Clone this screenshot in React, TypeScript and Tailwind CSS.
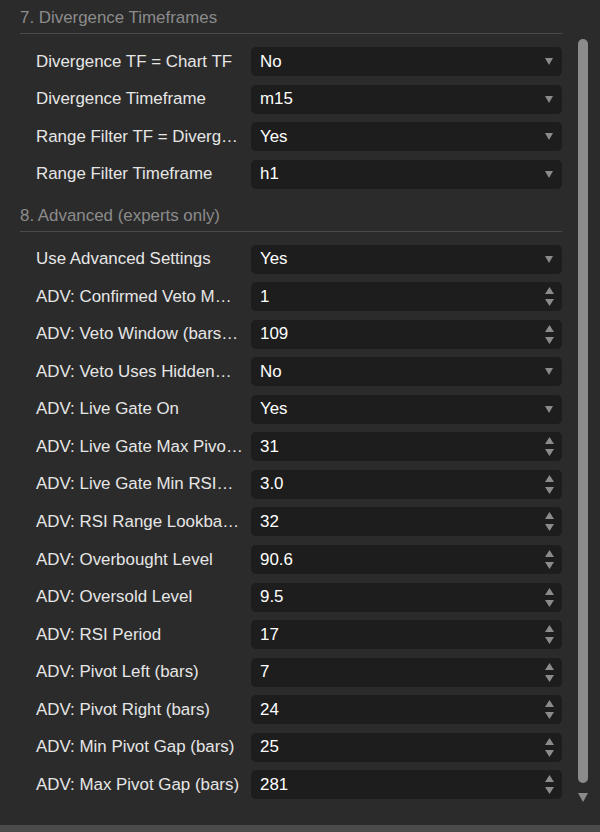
import React from "react";

type Field = {
  label: string;
  value: string;
  kind: "select" | "number";
};

type Section = {
  title: string;
  fields: Field[];
};

// labels are kept as the dialog elides them
const SECTIONS: Section[] = [
  {
    title: "7. Divergence Timeframes",
    fields: [
      { label: "Divergence TF = Chart TF", value: "No", kind: "select" },
      { label: "Divergence Timeframe", value: "m15", kind: "select" },
      { label: "Range Filter TF = Diverg…", value: "Yes", kind: "select" },
      { label: "Range Filter Timeframe", value: "h1", kind: "select" },
    ],
  },
  {
    title: "8. Advanced (experts only)",
    fields: [
      { label: "Use Advanced Settings", value: "Yes", kind: "select" },
      { label: "ADV: Confirmed Veto M…", value: "1", kind: "number" },
      { label: "ADV: Veto Window (bars…", value: "109", kind: "number" },
      { label: "ADV: Veto Uses Hidden…", value: "No", kind: "select" },
      { label: "ADV: Live Gate On", value: "Yes", kind: "select" },
      { label: "ADV: Live Gate Max Pivo…", value: "31", kind: "number" },
      { label: "ADV: Live Gate Min RSI…", value: "3.0", kind: "number" },
      { label: "ADV: RSI Range Lookba…", value: "32", kind: "number" },
      { label: "ADV: Overbought Level", value: "90.6", kind: "number" },
      { label: "ADV: Oversold Level", value: "9.5", kind: "number" },
      { label: "ADV: RSI Period", value: "17", kind: "number" },
      { label: "ADV: Pivot Left (bars)", value: "7", kind: "number" },
      { label: "ADV: Pivot Right (bars)", value: "24", kind: "number" },
      { label: "ADV: Min Pivot Gap (bars)", value: "25", kind: "number" },
      { label: "ADV: Max Pivot Gap (bars)", value: "281", kind: "number" },
    ],
  },
];

function Down({ w = 8, h = 7 }: { w?: number; h?: number }) {
  return (
    <svg width={w} height={h} viewBox={`0 0 ${w} ${h}`} className="block">
      <polygon points={`0,0 ${w},0 ${w / 2},${h}`} fill="#8b8b8b" />
    </svg>
  );
}

function Up({ w = 9, h = 7 }: { w?: number; h?: number }) {
  return (
    <svg width={w} height={h} viewBox={`0 0 ${w} ${h}`} className="block">
      <polygon points={`0,${h} ${w},${h} ${w / 2},0`} fill="#8b8b8b" />
    </svg>
  );
}

function FieldRow({ field }: { field: Field }) {
  return (
    <div className="flex items-center pl-[36px]">
      <div className="w-[204px] whitespace-nowrap text-[#e6e6e6]">{field.label}</div>
      <div className="ml-[11px] flex h-[29px] flex-1 items-center justify-between rounded-[5px] bg-[#1d1d1d] pl-[9px] pr-[8px] text-white">
        <span>{field.value}</span>
        {field.kind === "select" ? (
          <span className="pr-[1px]">
            <Down />
          </span>
        ) : (
          <span className="flex flex-col items-center gap-[5px]">
            <Up />
            <Down w={9} h={7} />
          </span>
        )}
      </div>
    </div>
  );
}

export default function App() {
  return (
    <div
      className="flex h-[832px] w-[600px] flex-col bg-[#2b2b2b] text-[16.9px] leading-[20px]"
      style={{ fontFamily: '"Liberation Sans", Arial, sans-serif' }}
    >
      <div className="flex flex-1">
        {/* settings list */}
        <div className="flex w-[578px] flex-col pr-[16px]">
          {SECTIONS.map((section, i) => (
            <div key={section.title} className={i === 0 ? "pt-[8px]" : "mt-[17px]"}>
              <div className="ml-[20px] border-b border-[#4a4a4a] pb-[5px] text-[#8b8b8b]">
                {section.title}
              </div>
              <div className="mt-[13px] flex flex-col gap-[8.55px]">
                {section.fields.map((f) => (
                  <FieldRow key={f.label} field={f} />
                ))}
              </div>
            </div>
          ))}
        </div>

        {/* scrollbar */}
        <div className="flex w-[22px] flex-col pt-[39px]">
          <div className="h-[744px] w-[10px] rounded-full bg-[#8b8b8b]" />
          <div className="mt-[10px]">
            <Down w={10} h={9} />
          </div>
        </div>
      </div>
      <div className="h-[7px] bg-[#4b4b4b]" />
    </div>
  );
}
